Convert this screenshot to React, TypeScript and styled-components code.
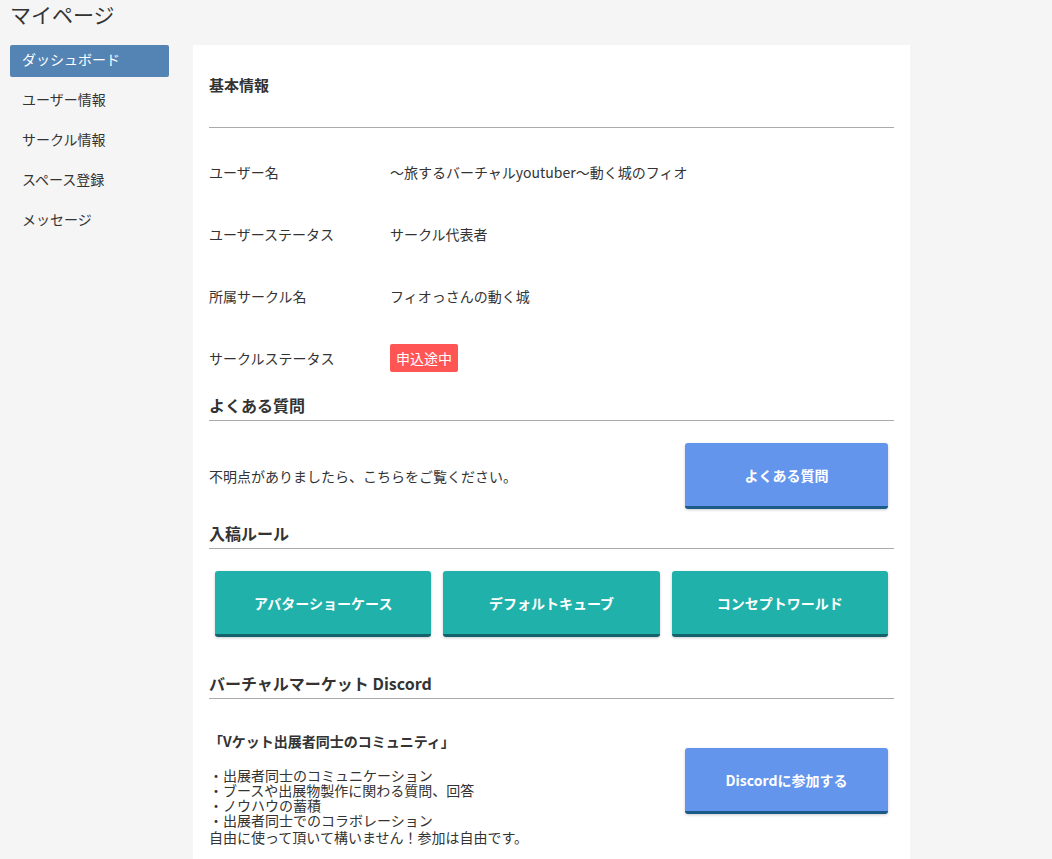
import React from "react";
import styled, { createGlobalStyle } from "styled-components";

const GlobalStyle = createGlobalStyle`
  html, body {
    margin: 0;
    padding: 0;
    background: #f5f5f5;
  }
  body {
    font-family: "Noto Sans CJK JP", "Noto Sans", sans-serif;
    color: #333;
    font-size: 14px;
  }
`;

const Page = styled.div`
  min-height: 859px;
  background: #f5f5f5;
`;

const PageTitle = styled.h1`
  margin: 0;
  padding: 0 10px;
  height: 45px;
  line-height: 28px;
  font-size: 21px;
  font-weight: normal;
  color: #333;
`;

const Layout = styled.div`
  display: flex;
  align-items: flex-start;
`;

const Sidebar = styled.nav`
  width: 159px;
  margin-left: 10px;
  margin-right: 24px;
  display: flex;
  flex-direction: column;
  gap: 8px;
`;

const NavItem = styled.a<{ $active?: boolean }>`
  display: block;
  height: 32px;
  line-height: 29px;
  padding-left: 12px;
  border-radius: 2px;
  font-size: 14px;
  color: ${(p) => (p.$active ? "#fff" : "#333")};
  background: ${(p) => (p.$active ? "#5484b4" : "transparent")};
  text-decoration: none;
  cursor: pointer;
`;

const Panel = styled.main`
  width: 717px;
  background: #fff;
  padding: 0 16px 20px;
  box-sizing: border-box;
`;

const InfoHeader = styled.div`
  height: 83px;
  display: flex;
  align-items: center;
  padding-bottom: 4px;
  border-bottom: 1px solid #aaa;
  box-sizing: border-box;
  font-size: 15px;
  font-weight: bold;
  margin-bottom: 13px;
`;

const InfoTable = styled.div`
  display: flex;
  flex-direction: column;
`;

const InfoRow = styled.div`
  display: grid;
  grid-template-columns: 181px 1fr;
  align-items: center;
  height: 62px;
`;

const InfoLabel = styled.div`
  font-size: 14px;
`;

const InfoValue = styled.div`
  font-size: 14px;
`;

const Badge = styled.span`
  display: inline-block;
  background: #f55;
  color: #fff;
  font-size: 14px;
  line-height: 28px;
  padding: 0 6px;
  border-radius: 2px;
`;

const SectionTitle = styled.h2`
  margin: 0;
  font-size: 16px;
  font-weight: bold;
  line-height: 24px;
  padding: 4px 0 3px;
  border-bottom: 1px solid #aaa;
  color: #333;
`;

const SectionBody = styled.div<{ $top: number; $bottom: number }>`
  padding-top: ${(p) => p.$top}px;
  padding-bottom: ${(p) => p.$bottom}px;
  display: flex;
  align-items: center;
  justify-content: space-between;
`;

const DiscordBody = styled(SectionBody)`
  align-items: flex-start;
`;

const BodyText = styled.div`
  font-size: 14px;
  line-height: 15px;
`;

const ActionButton = styled.a<{ $tone: "blue" | "teal" }>`
  display: flex;
  align-items: center;
  justify-content: center;
  box-sizing: border-box;
  height: 66px;
  margin: 0 6px;
  border-radius: 3px;
  font-size: 14px;
  font-weight: bold;
  color: #fff;
  text-decoration: none;
  cursor: pointer;
  background: ${(p) => (p.$tone === "blue" ? "#6495ed" : "#20b2aa")};
  border-bottom: 3px solid ${(p) => (p.$tone === "blue" ? "#1c5a88" : "#15626c")};
  box-shadow: 0 1px 3px rgba(0, 0, 0, 0.2);
`;

const SideButton = styled(ActionButton)`
  width: 203px;
  flex-shrink: 0;
`;

const DiscordButton = styled(SideButton)`
  margin-top: 17px;
`;

const RuleGrid = styled.div`
  display: grid;
  grid-template-columns: repeat(3, 1fr);
  padding: 22px 0 30px;
`;

const DiscordText = styled.div`
  font-size: 14px;
  line-height: 15px;
`;

const DiscordLead = styled.p`
  margin: 0 0 17px;
  font-weight: bold;
  line-height: 20px;
`;

const DiscordList = styled.ul`
  list-style: none;
  margin: 0;
  padding: 0;
  li {
    line-height: 15px;
  }
`;

const DiscordNote = styled.p`
  margin: 2px 0 0;
  line-height: 15px;
`;

const navItems = ["ダッシュボード", "ユーザー情報", "サークル情報", "スペース登録", "メッセージ"];

const infoRows: { label: string; value: React.ReactNode }[] = [
  { label: "ユーザー名", value: "～旅するバーチャルyoutuber～動く城のフィオ" },
  { label: "ユーザーステータス", value: "サークル代表者" },
  { label: "所属サークル名", value: "フィオっさんの動く城" },
  { label: "サークルステータス", value: <Badge>申込途中</Badge> },
];

const rules = ["アバターショーケース", "デフォルトキューブ", "コンセプトワールド"];

const discordPoints = [
  "出展者同士のコミュニケーション",
  "ブースや出展物製作に関わる質問、回答",
  "ノウハウの蓄積",
  "出展者同士でのコラボレーション",
];

export default function App() {
  return (
    <Page>
      <GlobalStyle />
      <PageTitle>マイページ</PageTitle>
      <Layout>
        <Sidebar>
          {navItems.map((item, i) => (
            <NavItem key={item} $active={i === 0}>
              {item}
            </NavItem>
          ))}
        </Sidebar>
        <Panel>
          <InfoHeader>基本情報</InfoHeader>
          <InfoTable>
            {infoRows.map((row) => (
              <InfoRow key={row.label}>
                <InfoLabel>{row.label}</InfoLabel>
                <InfoValue>{row.value}</InfoValue>
              </InfoRow>
            ))}
          </InfoTable>

          <SectionTitle>よくある質問</SectionTitle>
          <SectionBody $top={22} $bottom={8}>
            <BodyText>不明点がありましたら、こちらをご覧ください。</BodyText>
            <SideButton $tone="blue">よくある質問</SideButton>
          </SectionBody>

          <SectionTitle>入稿ルール</SectionTitle>
          <RuleGrid>
            {rules.map((r) => (
              <ActionButton key={r} $tone="teal">
                {r}
              </ActionButton>
            ))}
          </RuleGrid>

          <SectionTitle>バーチャルマーケット Discord</SectionTitle>
          <DiscordBody $top={32} $bottom={10}>
            <DiscordText>
              <DiscordLead>「Vケット出展者同士のコミュニティ」</DiscordLead>
              <DiscordList>
                {discordPoints.map((p) => (
                  <li key={p}>・{p}</li>
                ))}
              </DiscordList>
              <DiscordNote>自由に使って頂いて構いません！参加は自由です。</DiscordNote>
            </DiscordText>
            <DiscordButton $tone="blue">Discordに参加する</DiscordButton>
          </DiscordBody>
        </Panel>
      </Layout>
    </Page>
  );
}
